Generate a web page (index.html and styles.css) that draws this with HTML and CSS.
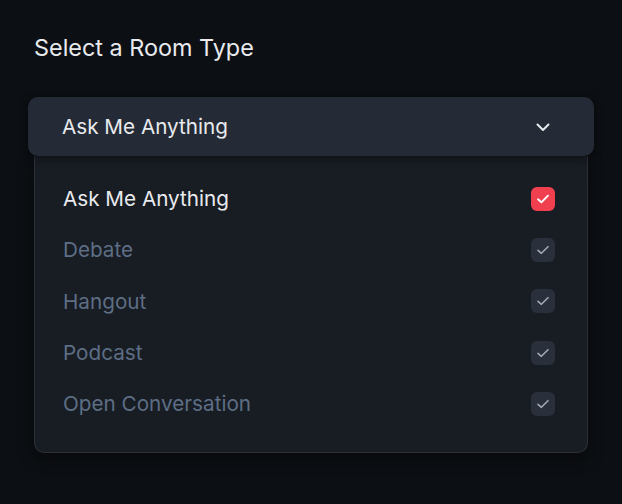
FILE: index.html
```html
<!DOCTYPE html>
<html>
<head>
<meta charset="utf-8">
<link rel="stylesheet" href="styles.css">
</head>
<body>
<div class="wrap">
  <div class="label">Select a Room Type</div>
  <div class="select">
    <div class="trigger">
      <span>Ask Me Anything</span>
      <svg class="chev" width="18" height="18" viewBox="0 0 18 18"><path d="M3.5 6.5 L9 12 L14.5 6.5" fill="none" stroke="#e6e9ee" stroke-width="2" stroke-linecap="round" stroke-linejoin="round"/></svg>
    </div>
    <ul class="panel">
      <li class="item selected"><span>Ask Me Anything</span><span class="box on"><svg width="16" height="16" viewBox="0 0 16 16"><path d="M3 8.3 L6.4 11.3 L13 4.7" fill="none" stroke="#fff" stroke-width="1.9" stroke-linecap="round" stroke-linejoin="round"/></svg></span></li>
      <li class="item"><span>Debate</span><span class="box"><svg width="16" height="16" viewBox="0 0 16 16"><path d="M3 8.3 L6.4 11.3 L13 4.7" fill="none" stroke="#a3a9b4" stroke-width="1.6" stroke-linecap="round" stroke-linejoin="round"/></svg></span></li>
      <li class="item"><span>Hangout</span><span class="box"><svg width="16" height="16" viewBox="0 0 16 16"><path d="M3 8.3 L6.4 11.3 L13 4.7" fill="none" stroke="#a3a9b4" stroke-width="1.6" stroke-linecap="round" stroke-linejoin="round"/></svg></span></li>
      <li class="item"><span>Podcast</span><span class="box"><svg width="16" height="16" viewBox="0 0 16 16"><path d="M3 8.3 L6.4 11.3 L13 4.7" fill="none" stroke="#a3a9b4" stroke-width="1.6" stroke-linecap="round" stroke-linejoin="round"/></svg></span></li>
      <li class="item"><span>Open Conversation</span><span class="box"><svg width="16" height="16" viewBox="0 0 16 16"><path d="M3 8.3 L6.4 11.3 L13 4.7" fill="none" stroke="#a3a9b4" stroke-width="1.6" stroke-linecap="round" stroke-linejoin="round"/></svg></span></li>
    </ul>
  </div>
</div>
</body>
</html>
```

FILE: styles.css
```css
* { box-sizing: border-box; }
html, body { margin: 0; padding: 0; }
body {
  background: #0c0f13;
  font-family: Inter, "Noto Sans", sans-serif;
  width: 622px;
  height: 504px;
  overflow: hidden;
}
.wrap {
  padding: 34px 28px 0 28px;
}
.label {
  color: #e8eaee;
  font-size: 23.4px;
  line-height: 28px;
  padding-left: 6px;
  margin-bottom: 35px;
}
.select {
  display: flex;
  flex-direction: column;
}
.trigger {
  position: relative;
  z-index: 2;
  height: 59px;
  background: #252b36;
  border-radius: 10px;
  display: flex;
  align-items: center;
  justify-content: space-between;
  padding: 0 42px 0 34px;
  color: #e8eaee;
  font-size: 20.7px;
  box-shadow: 0 2px 10px rgba(0,0,0,0.45);
}
.chev { display: block; margin-top: 1px; }
.panel {
  list-style: none;
  margin: 0 6px;
  padding: 17px 32px 23px 28px;
  background: #181c23;
  border: 1px solid #2b3039;
  border-top: none;
  border-radius: 0 0 10px 10px;
  box-shadow: 0 6px 16px rgba(0,0,0,0.4);
}
.item {
  height: 51.3px;
  display: flex;
  align-items: center;
  justify-content: space-between;
  font-size: 20.7px;
  color: #5d6e85;
}
.item.selected { color: #e8eaee; }
.box {
  width: 24px;
  height: 24px;
  border-radius: 6px;
  background: #2a303b;
  display: flex;
  align-items: center;
  justify-content: center;
}
.box.on { background: #f0404f; }
.box svg { display: block; }
```
